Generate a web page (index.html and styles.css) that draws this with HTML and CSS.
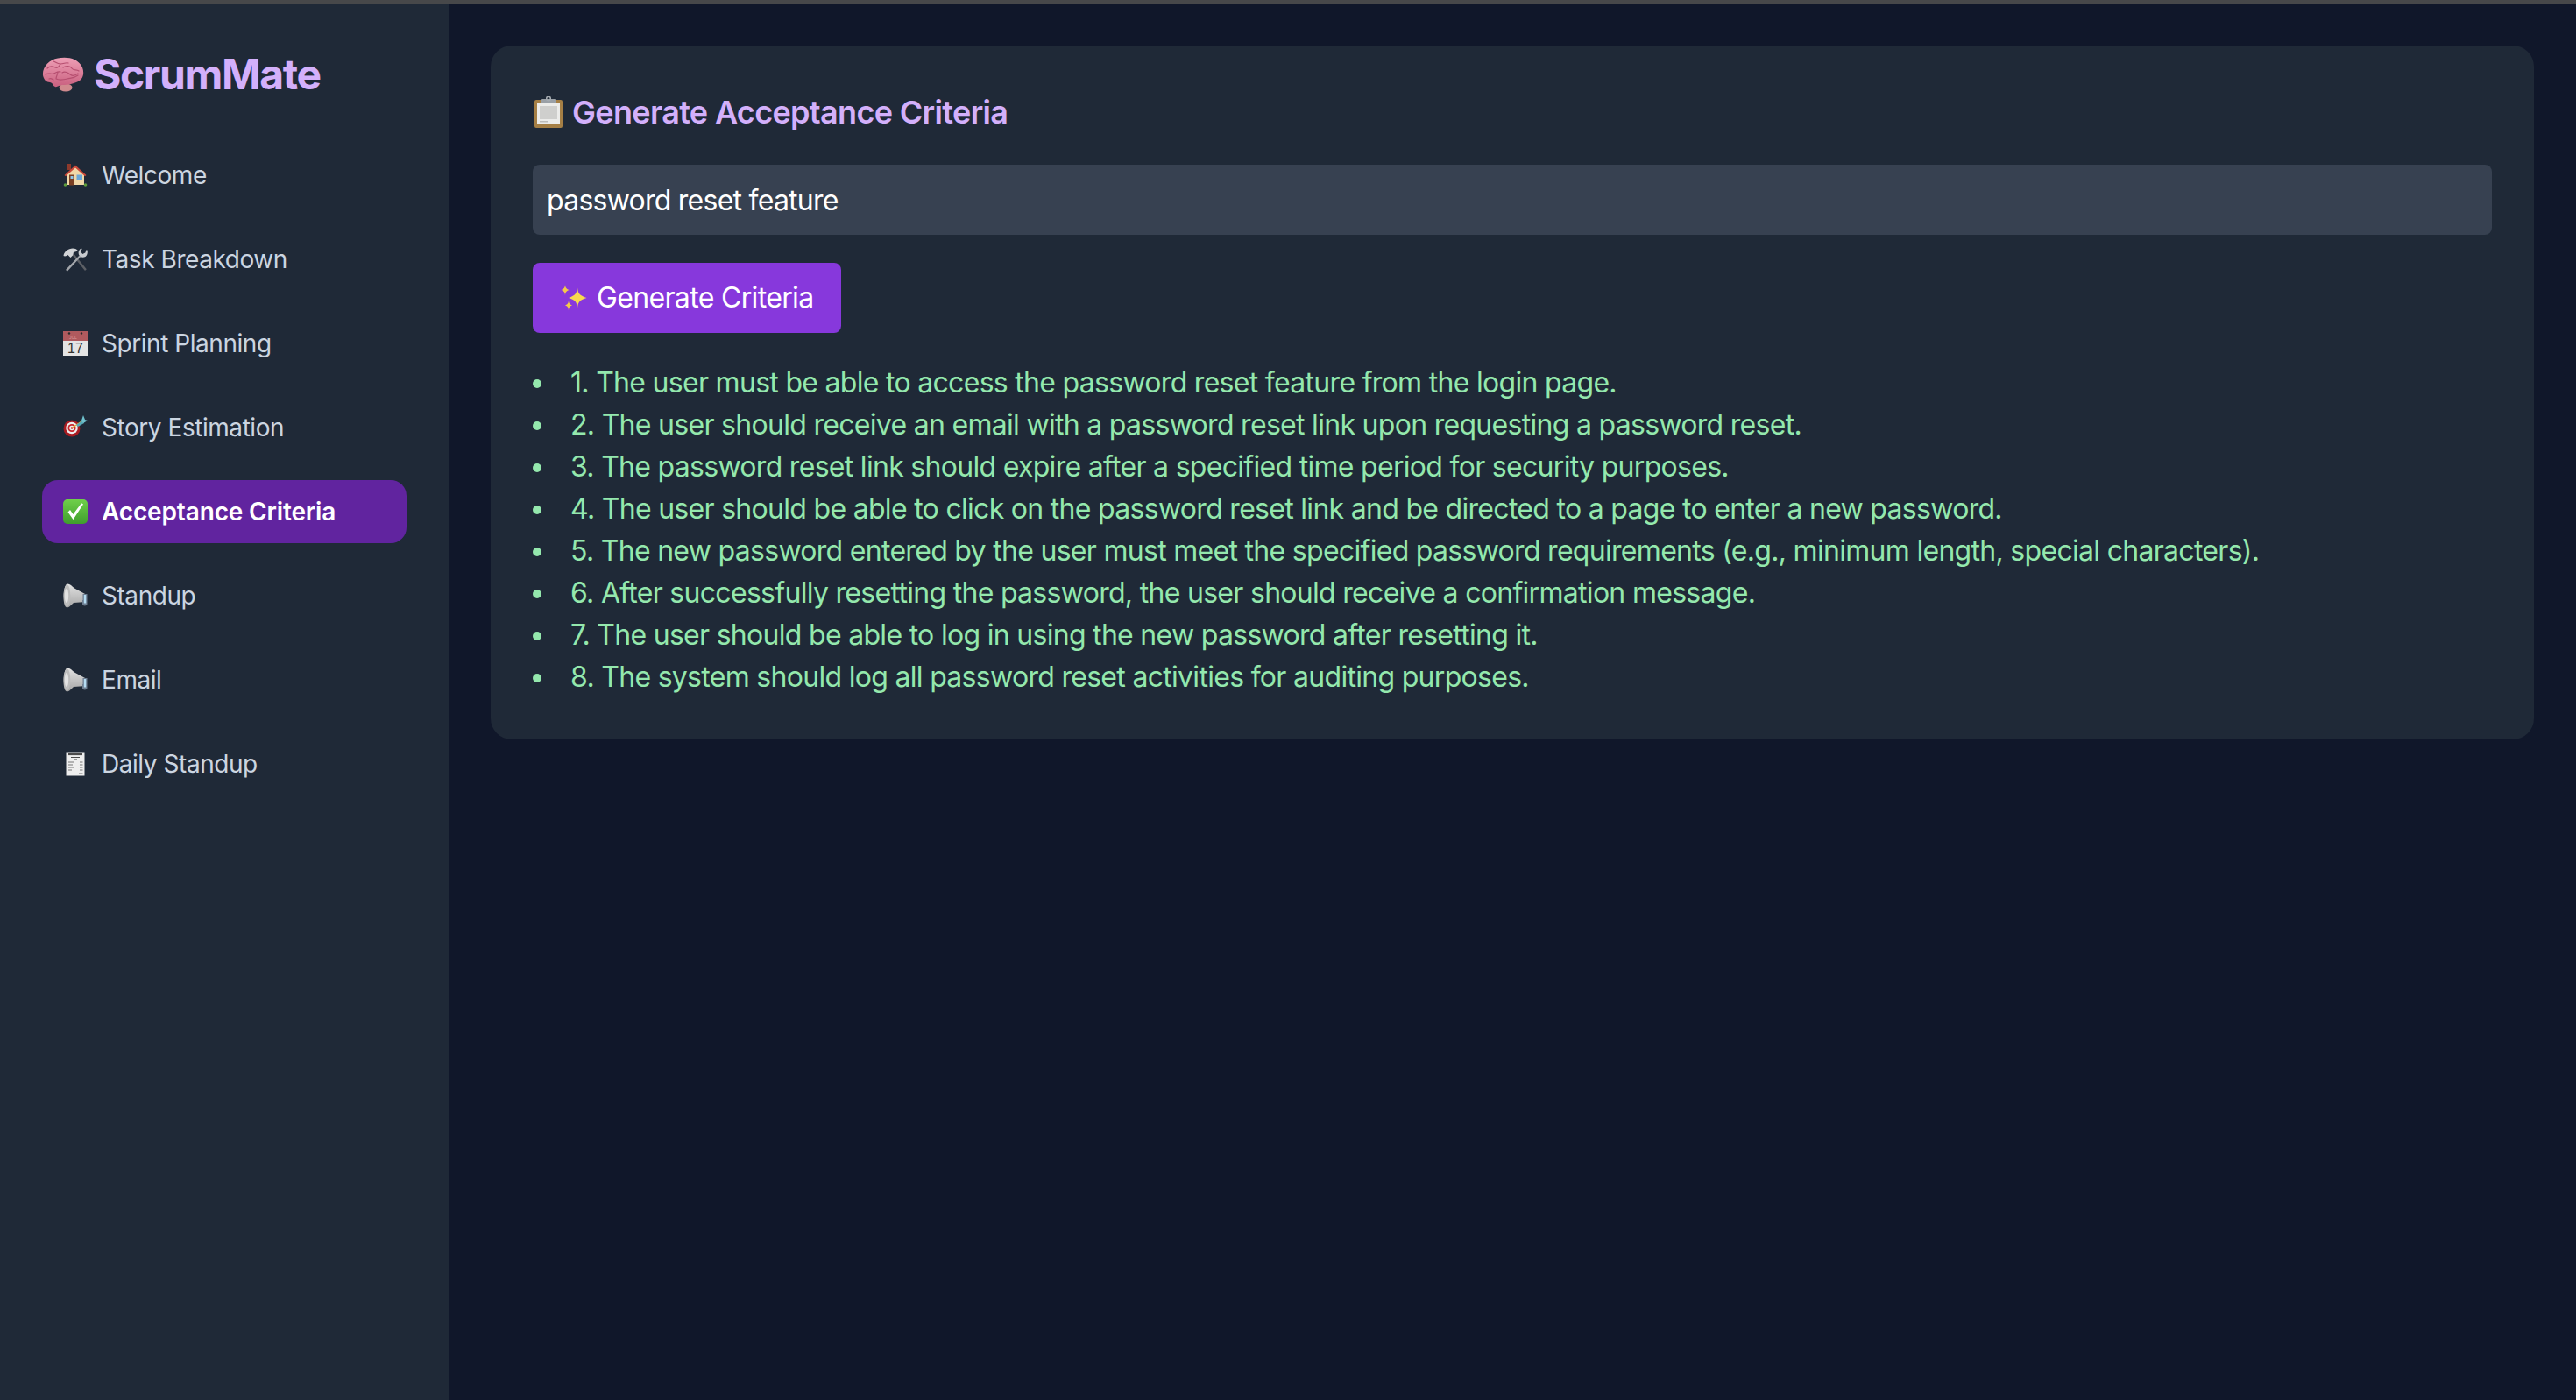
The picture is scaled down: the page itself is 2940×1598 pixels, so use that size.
FILE: index.html
```html
<!DOCTYPE html>
<html lang="en">
<head>
<meta charset="utf-8">
<title>ScrumMate</title>
<link rel="stylesheet" href="styles.css">
</head>
<body>
<svg class="defs" aria-hidden="true">
  <defs>
    <linearGradient id="hornGrad" x1="0" y1="0" x2="0" y2="1">
      <stop offset="0" stop-color="#e2e2e2"/><stop offset="1" stop-color="#a6a6a6"/>
    </linearGradient>
    <linearGradient id="checkGrad" x1="0" y1="0" x2="0" y2="1">
      <stop offset="0" stop-color="#6fd04a"/><stop offset="1" stop-color="#3f9e2c"/>
    </linearGradient>
    <linearGradient id="brainGrad" x1="0" y1="0" x2="0" y2="1">
      <stop offset="0" stop-color="#ee9fb6"/><stop offset="1" stop-color="#c9607f"/>
    </linearGradient>
  </defs>
  <symbol id="megaphone" viewBox="0 0 28 28">
    <path d="M5 .5C8 .5 10 3 13 5.500L26 12.500V21L12 22C9 24.500 7 27.500 4.500 27.500 1.500 27 .5 21 .5 14.500S2.500 .5 5 .5Z" fill="url(#hornGrad)"/>
    <ellipse cx="4.500" cy="14" rx="3.800" ry="12.500" fill="#bdbdbd"/>
    <ellipse cx="4" cy="14" rx="2.200" ry="8" fill="#e2e2e2"/>
    <path d="M22.500 12h5v11.500c0 2.500-5.500 2.500-5.500 0V19h.5z" fill="#6f7f92"/>
    <rect x="23.800" y="13" width="2.400" height="9.500" fill="#b5dcf2"/>
  </symbol>
</svg>
<div class="topbar"></div>
<div class="app">
  <aside class="sidebar">
    <h1 class="brand">
      <svg class="brand-icon" viewBox="0 0 48 40">
        <ellipse cx="27" cy="35" rx="7.500" ry="4.500" fill="#d08a8e"/>
        <path d="M1 21C0 12 8 3 18 1.500 28-.5 41 1 46 12c3 8 0 15-7 17-5 2-9 3-14 3-6 0-8 3-10 2-3-1-2-4-6-5-4 0-7-3-8-8z" fill="url(#brainGrad)"/>
        <g fill="none" stroke="#b64f70" stroke-width="1.200" stroke-linecap="round">
          <path d="M6 13c3-3 7-2 9-1s5-1 6-4M13 5c3 1 4 3 8 3s6-2 9-1M24 12c3-2 8-2 10 1s5 1 8 3"/>
          <path d="M4 20c3-2 6 0 9-1s5-3 8-2M18 17c0 3-2 5-2 8M16 25c4 2 9 1 13 0s8-1 12-4M23 18c3-2 7 0 9 2s6 1 9-1M8 25c2-1 3 0 5 1"/>
        </g>
      </svg>
      <span>ScrumMate</span>
    </h1>
    <nav class="nav">
      <a class="nav-item">
        <svg class="nav-icon" viewBox="0 0 28 28">
          <rect x="5" y="1" width="4" height="7" fill="#8f3a2c"/>
          <path d="M4 13 14 4l10 9v12H4z" fill="#f0d8a8"/>
          <path d="M1.500 14 14 2.500 26.500 14l-1.500 1.200L14 5.500 3 15.200z" fill="#c9483a"/>
          <rect x="7" y="13.500" width="6" height="12" fill="#7a3f22"/>
          <rect x="8.500" y="15" width="3" height="3" fill="#8ec8ea"/>
          <rect x="15.500" y="13.500" width="6.500" height="5.500" fill="#6ba8d8"/>
          <circle cx="2.500" cy="25" r="1.800" fill="#5d9b3c"/>
          <circle cx="25.500" cy="25" r="1.800" fill="#5d9b3c"/>
        </svg>
        <span>Welcome</span>
      </a>
      <a class="nav-item">
        <svg class="nav-icon" viewBox="0 0 28 28">
          <path d="M25 27 10 8.500l1.800-1.500L26.800 25.200z" fill="#5c5f65"/>
          <path d="M3 26 19.500 8.500l1.600 1.500L5 27.500z" fill="#a3a6ab"/>
          <path d="M.5 10C1 5.500 6 1.500 11 1.500c3 0 5 1 6 3l-5 1.500-1 3.500-2.500 2.500-3-3c-1 .5-2 1.500-3.500 1.500z" fill="#d2d4d7"/>
          <path d="M27.500 3.500c.8 3 0 6-2 7.500-2 1-4 1-5.500 0l-2-2.200C17 6 18 3 20.500 1.500l1.300.4-2 3 2.500 3 3-1.400 1.400-3.500z" fill="#c8cbcf"/>
        </svg>
        <span>Task Breakdown</span>
      </a>
      <a class="nav-item">
        <svg class="nav-icon" viewBox="0 0 28 28">
          <rect width="28" height="28" fill="#e4e4e4"/>
          <rect width="28" height="11" fill="#b05a5e"/>
          <circle cx="7" cy="2.500" r="1.200" fill="#2b2b2b"/>
          <circle cx="21" cy="2.500" r="1.200" fill="#2b2b2b"/>
          <text class="cal-month" x="7" y="9">JUL</text>
          <text class="cal-day" x="14" y="24.500">17</text>
        </svg>
        <span>Sprint Planning</span>
      </a>
      <a class="nav-item">
        <svg class="nav-icon" viewBox="0 0 28 28">
          <circle cx="10" cy="15" r="9.500" fill="#a81c22"/>
          <circle cx="10" cy="14.500" r="6.800" fill="#eee"/>
          <circle cx="10" cy="14.500" r="4.600" fill="#c9252b"/>
          <circle cx="10" cy="14.500" r="2.800" fill="#eee"/>
          <circle cx="10" cy="14.500" r="1.300" fill="#c9252b"/>
          <path d="M10 14.500 21 7" stroke="#e5b13c" stroke-width="1.200"/>
          <path d="M15 11 22 6l2 3-7 4z" fill="#58a9b7"/>
          <path d="M21 6 23 0l2 5 3 1-5 3z" fill="#6fc0cc"/>
        </svg>
        <span>Story Estimation</span>
      </a>
      <a class="nav-item nav-item-active">
        <svg class="nav-icon" viewBox="0 0 28 28">
          <rect width="28" height="28" rx="5" fill="url(#checkGrad)"/>
          <path d="M5.500 14.500 11.500 23 23 5.500l-2-1.200L11.500 17 8 12z" fill="#fff"/>
        </svg>
        <span>Acceptance Criteria</span>
      </a>
      <a class="nav-item">
        <svg class="nav-icon"><use href="#megaphone"/></svg>
        <span>Standup</span>
      </a>
      <a class="nav-item">
        <svg class="nav-icon"><use href="#megaphone"/></svg>
        <span>Email</span>
      </a>
      <a class="nav-item">
        <svg class="nav-icon" viewBox="0 0 28 28">
          <rect x="3.500" y="0.500" width="21" height="27" fill="#eeeeee"/>
          <g stroke="#4b4b4b" fill="none">
            <path d="M6 3h16" stroke-width="2.200"/>
            <path d="M9 6.500h10" stroke-width="1"/>
            <path d="M12 9h4" stroke-width="1"/>
            <path d="M6 12h6M19 12h3.500M6 15h5M19 15h3.500M6 18h6M19 18h3.500M6 21h4M19 21h3.500M18 25h4.500" stroke-width="1" stroke="#777"/>
          </g>
        </svg>
        <span>Daily Standup</span>
      </a>
    </nav>
  </aside>
  <main class="main">
    <section class="panel">
      <h2 class="panel-title">
        <svg class="title-icon" viewBox="0 0 36 36">
          <rect x="2" y="4" width="32" height="32" rx="2" fill="#a57f45"/>
          <rect x="5" y="7" width="26" height="25" fill="#ececea"/>
          <rect x="8" y="11" width="20" height="15" fill="#cfcfcd"/>
          <rect x="8" y="28" width="10" height="1.500" fill="#bdbdbb"/>
          <rect x="10" y="3" width="16" height="5" rx="1" fill="#9aa0a6"/>
          <circle cx="18" cy="2.500" r="2.300" fill="none" stroke="#a4aab0" stroke-width="1.500"/>
        </svg>
        <span>Generate Acceptance Criteria</span>
      </h2>
      <input class="topic-input" type="text" value="password reset feature">
      <button class="generate-btn" type="button">
        <svg class="btn-icon" viewBox="0 0 30 30">
          <path d="M19 3.500c.8 6 2 8.500 10.500 11.500-8.500 2.500-9.700 5-10.500 11.500-.8-6.500-2-9-10-11.500 8-3 9.200-5.500 10-11.500z" fill="#f8d94f"/>
          <path d="M5 0c.4 3.500 1 4.500 4.500 6C6 7.500 5.400 8.500 5 12c-.4-3.500-1-4.500-4.500-6C4 4.500 4.600 3.500 5 0z" fill="#f5c94a"/>
          <path d="M9 18c.3 3 1 4 4 5.500-3 1-3.700 2.500-4 6-.3-3.500-1-5-4-6 3-1.500 3.700-2.500 4-5.500z" fill="#f5c94a"/>
        </svg>
        <span>Generate Criteria</span>
      </button>
      <ul class="criteria">
        <li>1. The user must be able to access the password reset feature from the login page.</li>
        <li>2. The user should receive an email with a password reset link upon requesting a password reset.</li>
        <li>3. The password reset link should expire after a specified time period for security purposes.</li>
        <li>4. The user should be able to click on the password reset link and be directed to a page to enter a new password.</li>
        <li>5. The new password entered by the user must meet the specified password requirements (e.g., minimum length, special characters).</li>
        <li>6. After successfully resetting the password, the user should receive a confirmation message.</li>
        <li>7. The user should be able to log in using the new password after resetting it.</li>
        <li>8. The system should log all password reset activities for auditing purposes.</li>
      </ul>
    </section>
  </main>
</div>
</body>
</html>
```

FILE: styles.css
```css
* {
  box-sizing: border-box;
}

html,
body {
  height: 100%;
}

body {
  margin: 0;
  display: flex;
  flex-direction: column;
  overflow: hidden;
  background: #10172a;
  font-family: Inter, "Liberation Sans", sans-serif;
  color: #fff;
}

.defs {
  width: 0;
  height: 0;
  position: absolute;
}

.topbar {
  height: 4px;
  flex: none;
  background: #47484a;
}

.app {
  flex: 1;
  display: flex;
  min-height: 0;
}

.sidebar {
  width: 512px;
  flex: none;
  padding: 48px;
  background: #1f2937;
}

.brand {
  margin: 0 0 47px;
  padding-top: 1px;
  display: flex;
  align-items: center;
  gap: 11px;
  font-size: 48px;
  line-height: 64px;
  font-weight: 700;
  letter-spacing: -1.4px;
  color: #d3b0fb;
}

.brand-icon {
  width: 48px;
  height: 40px;
  flex: none;
}

.nav {
  display: flex;
  flex-direction: column;
  gap: 24px;
  width: 416px;
}

.nav-item {
  height: 72px;
  padding: 0 24px;
  display: flex;
  align-items: center;
  gap: 16px;
  border-radius: 18px;
  font-size: 28px;
  line-height: 40px;
  letter-spacing: -0.45px;
  color: #cbd5e1;
}

.nav-item-active {
  background: #61249f;
  color: #fff;
  font-weight: 600;
  letter-spacing: -0.15px;
}

.nav-icon {
  width: 28px;
  height: 28px;
  flex: none;
}

.cal-month {
  font-family: "Liberation Sans", sans-serif;
  font-size: 5px;
  letter-spacing: 0;
  fill: #d99;
}

.cal-day {
  font-family: "Liberation Sans", sans-serif;
  font-size: 16px;
  letter-spacing: 0;
  fill: #333;
  text-anchor: middle;
}

.main {
  flex: 1;
  min-width: 0;
  padding: 48px;
}

.panel {
  padding: 48px 48px 47px;
  border-radius: 24px;
  background: #1f2937;
}

.panel-title {
  margin: 0 0 32px;
  display: flex;
  align-items: center;
  gap: 9px;
  font-size: 36px;
  line-height: 56px;
  font-weight: 600;
  letter-spacing: -0.67px;
  color: #d3b0fb;
}

.title-icon {
  width: 36px;
  height: 36px;
  flex: none;
}

.topic-input {
  display: block;
  width: 100%;
  height: 80px;
  padding: 16px;
  margin: 0 0 32px;
  border: 0;
  outline: 0;
  border-radius: 8px;
  background: #374151;
  color: #fff;
  font: 400 32px/48px Inter, "Liberation Sans", sans-serif;
  letter-spacing: -0.75px;
}

.generate-btn {
  width: 352px;
  height: 80px;
  padding: 0 0 0 32px;
  display: flex;
  align-items: center;
  gap: 11px;
  border: 0;
  border-radius: 8px;
  background: #8738dc;
  color: #fff;
  font: 400 32px/48px Inter, "Liberation Sans", sans-serif;
  letter-spacing: -0.66px;
  white-space: nowrap;
}

.btn-icon {
  width: 30px;
  height: 30px;
  flex: none;
}

.criteria {
  margin: 33px 0 0;
  padding: 0;
  list-style: disc inside;
  font-size: 32px;
  line-height: 48px;
  letter-spacing: -0.7px;
  color: #94e8ad;
}
```
